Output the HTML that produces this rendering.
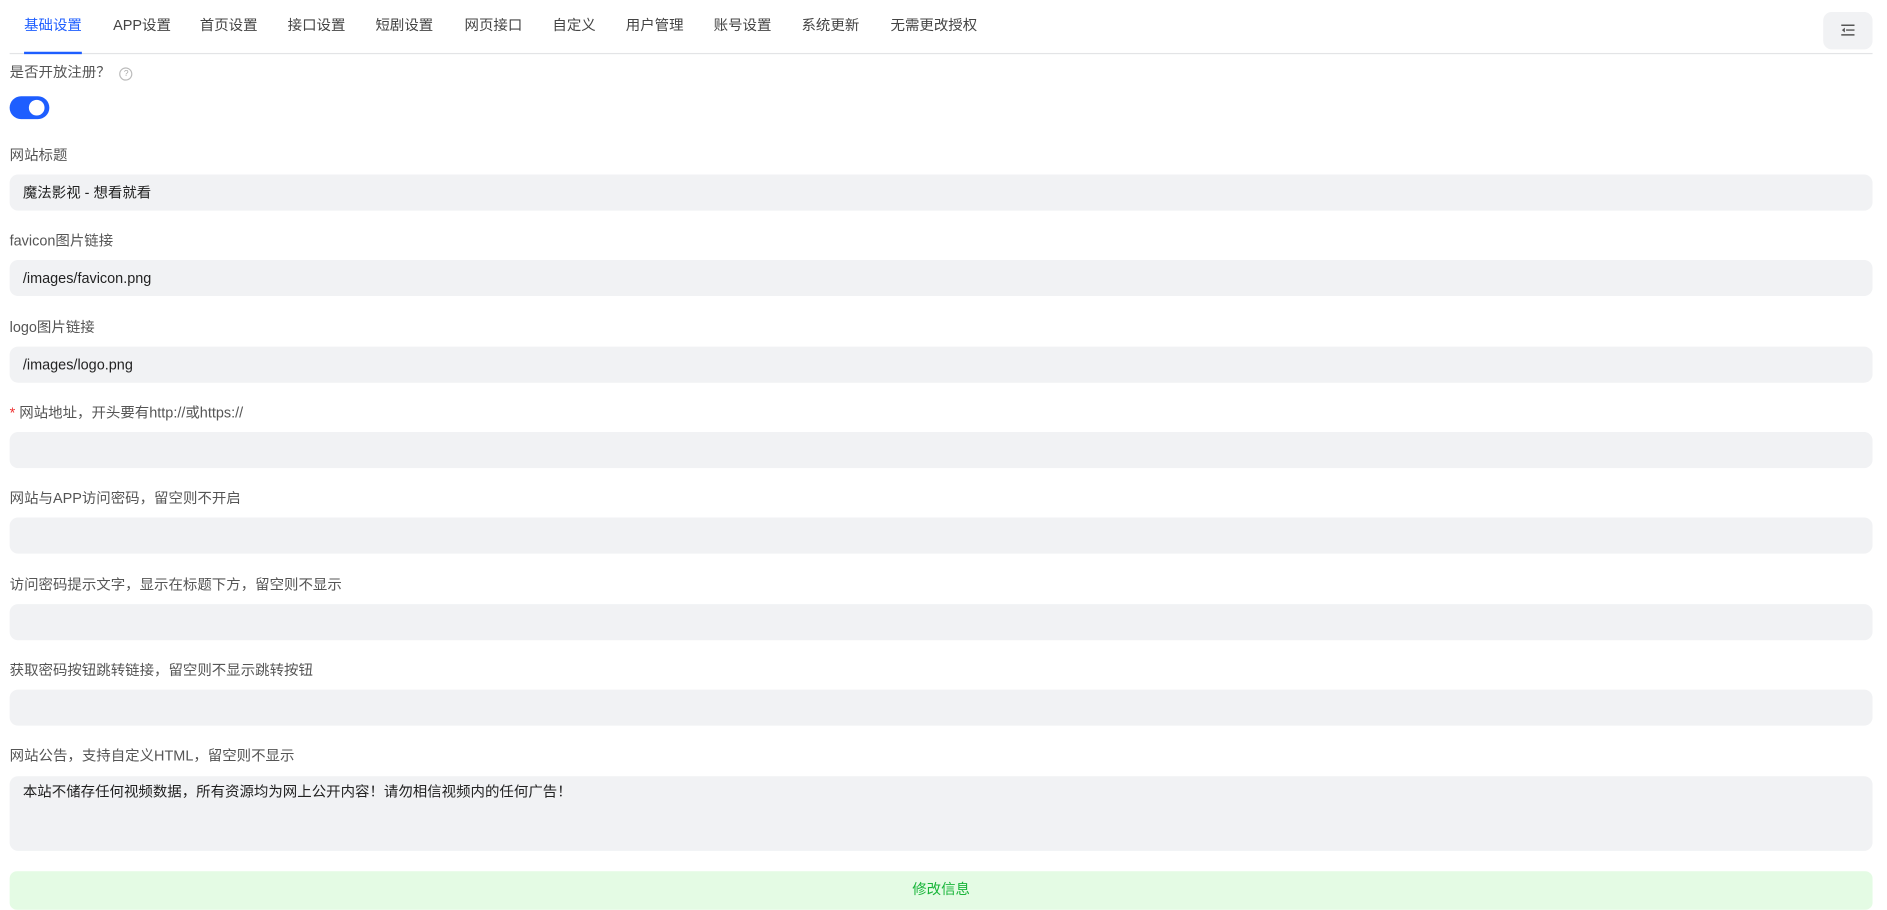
<!DOCTYPE html>
<html><head><meta charset="utf-8"><style>
html,body{margin:0;padding:0;background:#fff;overflow:hidden;width:1887px;height:897px}
#w{position:absolute;left:0;top:0;width:1568px;height:745px;transform:scale(1.20344);transform-origin:0 0;font-family:"Liberation Sans","Noto Sans CJK SC",sans-serif;font-size:12px;color:#555}
.t{position:absolute;top:14px;line-height:14px;color:#444;white-space:nowrap}
.a{position:absolute;white-space:nowrap}
.lb{position:absolute;left:8px;line-height:14px;color:#555;white-space:nowrap}
.in{position:absolute;left:8px;width:1548px;height:30px;background:#f1f2f4;border-radius:7px;box-sizing:border-box;padding-left:11px;line-height:30px;color:#222}
</style></head><body><div id="w">
<div class="t" style="left:20px;color:#1e5eff">基础设置</div>
<div class="t" style="left:94px">APP设置</div>
<div class="t" style="left:166px">首页设置</div>
<div class="t" style="left:239px">接口设置</div>
<div class="t" style="left:312px">短剧设置</div>
<div class="t" style="left:386px">网页接口</div>
<div class="t" style="left:459px">自定义</div>
<div class="t" style="left:520px">用户管理</div>
<div class="t" style="left:593px">账号设置</div>
<div class="t" style="left:666px">系统更新</div>
<div class="t" style="left:740px">无需更改授权</div>
<div class="a" style="left:8px;top:44px;width:1548px;height:1px;background:#e3e4e6"></div>
<div class="a" style="left:20px;top:43px;width:48px;height:2px;background:#1e5eff"></div>
<div class="a" style="left:1515px;top:10px;width:41px;height:31px;background:#f1f2f4;border-radius:7px">
<svg width="41" height="31" viewBox="0 0 41 31"><g stroke="#555" stroke-width="1.2"><line x1="15" y1="11" x2="26" y2="11"/><line x1="19" y1="15" x2="26" y2="15"/><line x1="15" y1="19" x2="26" y2="19"/></g><path d="M18 13 L15.5 15 L18 17Z" fill="#555"/></svg></div>
<div class="lb" style="top:53px">是否开放注册？ <span style="display:inline-block;width:9px;height:9px;border:1px solid #bbb;border-radius:50%;font-size:7px;line-height:9px;text-align:center;color:#aaa;margin-left:4px;vertical-align:1px">?</span></div>
<div class="a" style="left:8px;top:80px;width:33px;height:19px;background:#1e5eff;border-radius:10px"><div style="position:absolute;left:16px;top:3px;width:13px;height:13px;border-radius:50%;background:#fff"></div></div>
<div class="lb" style="top:122px">网站标题</div>
<div class="in" style="top:145px">魔法影视 - 想看就看</div>
<div class="lb" style="top:193px">favicon图片链接</div>
<div class="in" style="top:216px">/images/favicon.png</div>
<div class="lb" style="top:265px">logo图片链接</div>
<div class="in" style="top:288px">/images/logo.png</div>
<div class="lb" style="top:336px"><span style="color:#e33">*</span> 网站地址，开头要有http://或https://</div>
<div class="in" style="top:359px"></div>
<div class="lb" style="top:407px">网站与APP访问密码，留空则不开启</div>
<div class="in" style="top:430px"></div>
<div class="lb" style="top:479px">访问密码提示文字，显示在标题下方，留空则不显示</div>
<div class="in" style="top:502px"></div>
<div class="lb" style="top:550px">获取密码按钮跳转链接，留空则不显示跳转按钮</div>
<div class="in" style="top:573px"></div>
<div class="lb" style="top:621px">网站公告，支持自定义HTML，留空则不显示</div>
<div class="in" style="top:645px;height:62px;line-height:14px;padding-top:6px">本站不储存任何视频数据，所有资源均为网上公开内容！请勿相信视频内的任何广告！</div>
<div class="a" style="left:8px;top:724px;width:1548px;height:32px;background:#e4fbe4;border-radius:6px;color:#19b53a;text-align:center;line-height:30px">修改信息</div>
</div></body></html>
